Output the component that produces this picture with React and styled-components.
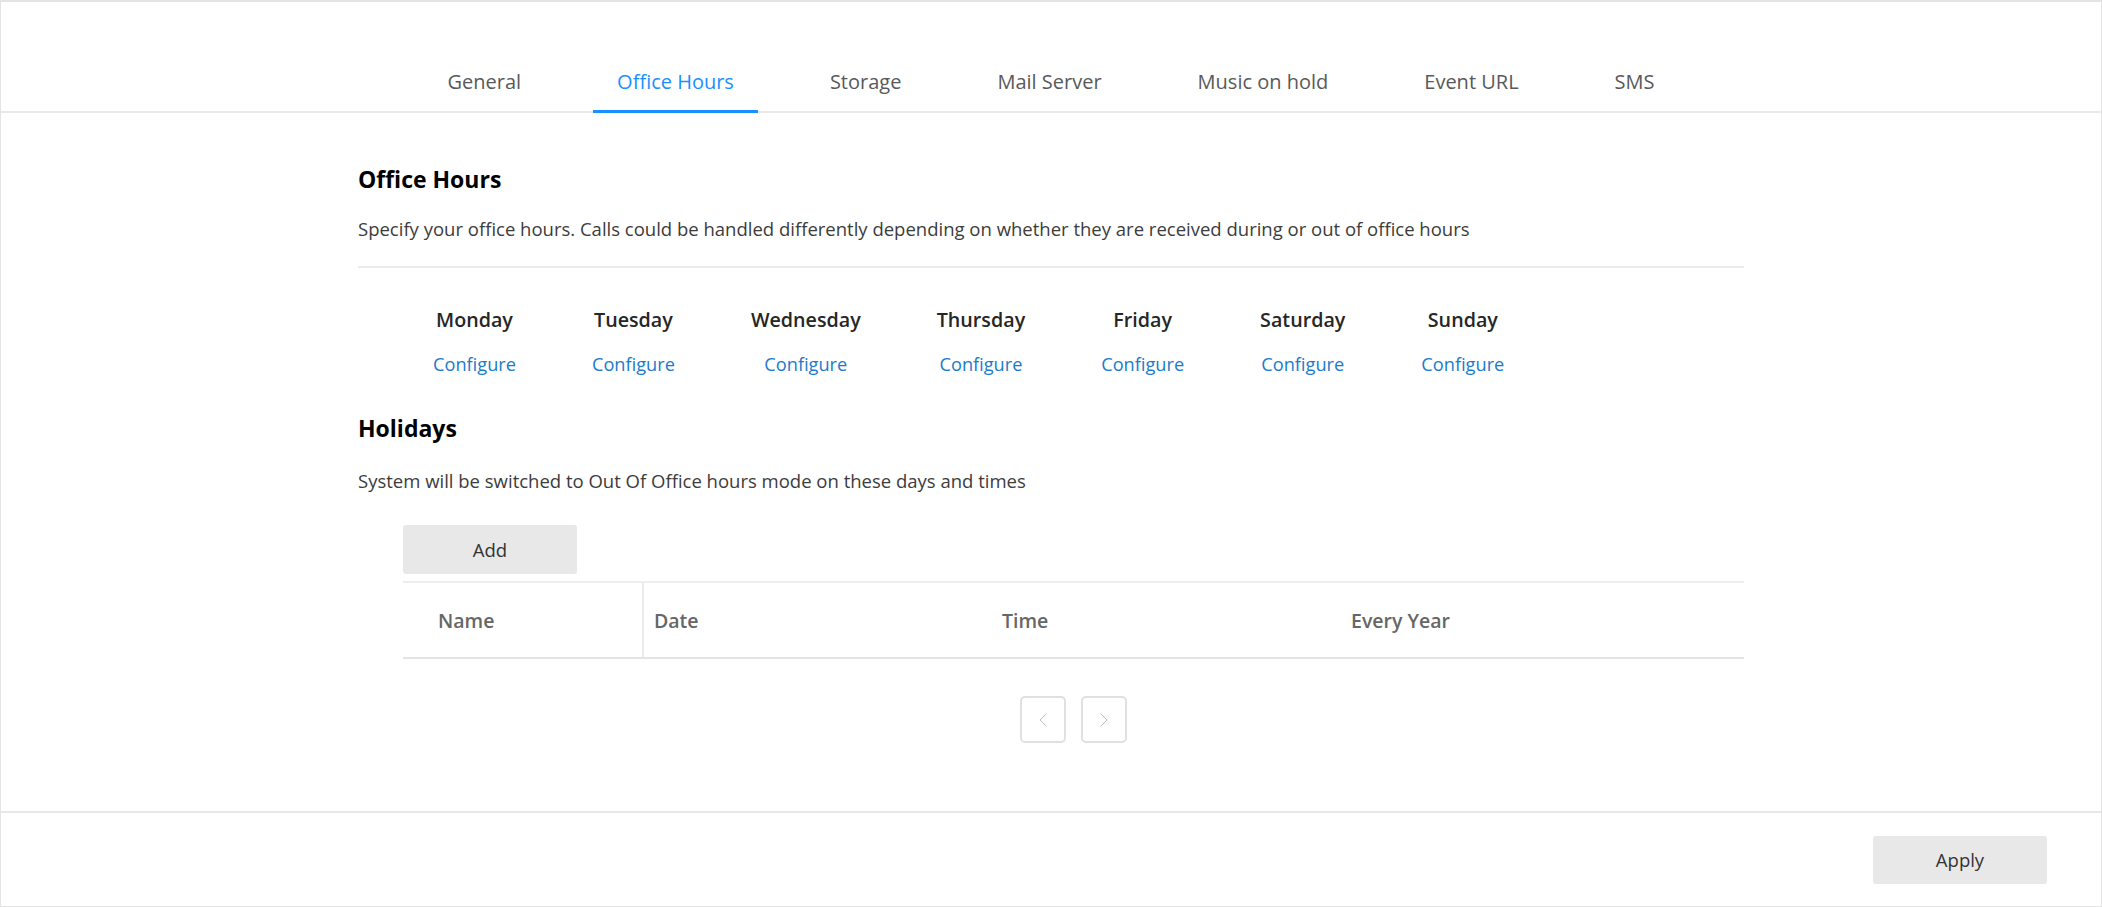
import styled, { createGlobalStyle } from "styled-components";
import { ChevronLeft, ChevronRight } from "lucide-react";

const GlobalStyle = createGlobalStyle`
  html, body {
    margin: 0;
    padding: 0;
    background: #fff;
  }
  body {
    font-family: "Open Sans", "Noto Sans", sans-serif;
    color: #333;
  }
  * {
    box-sizing: border-box;
  }
`;

const Page = styled.div`
  display: flex;
  flex-direction: column;
  height: 907px;
  border: 1px solid #e4e4e4;
  border-top-width: 2px;
`;

const TabBar = styled.nav`
  display: flex;
  justify-content: center;
  align-items: flex-end;
  gap: 48px;
  height: 111px;
  border-bottom: 2px solid #e8e8e8;
`;

const Tab = styled.div`
  position: relative;
  padding: 0 24px 15px;
  font-size: 20px;
  line-height: 28px;
  color: ${(p) => (p.active ? "#1890ff" : "#595959")};
  cursor: pointer;

  &::after {
    content: "";
    display: ${(p) => (p.active ? "block" : "none")};
    position: absolute;
    left: 0;
    right: 0;
    bottom: -2px;
    height: 3px;
    background: #1890ff;
  }
`;

const Main = styled.main`
  flex: 1;
`;

const Content = styled.div`
  width: 66%;
  margin: 0 auto;
`;

const Heading = styled.h2`
  margin: ${(p) => p.top}px 0 0;
  font-size: 23px;
  line-height: 30px;
  font-weight: 700;
  color: #000;
`;

const Description = styled.p`
  margin: ${(p) => p.top}px 0 0;
  font-size: 18.5px;
  line-height: 26px;
  color: #3c3c3c;
`;

const Divider = styled.hr`
  margin: 24px 0 0;
  border: none;
  border-top: 2px solid #ebebeb;
`;

const DaysRow = styled.div`
  display: flex;
  gap: 76px;
  padding-left: 75px;
  margin-top: 38px;
`;

const Day = styled.div`
  display: flex;
  flex-direction: column;
  align-items: center;
  gap: 17px;
`;

const DayName = styled.div`
  font-size: 19.7px;
  line-height: 28px;
  font-weight: 600;
  color: #262626;
`;

const ConfigureLink = styled.a`
  font-size: 18.2px;
  line-height: 26px;
  color: #1b7bc9;
  text-decoration: none;
  cursor: pointer;
`;

const Indented = styled.div`
  margin-left: 45px;
`;

const GreyButton = styled.button`
  width: 174px;
  height: ${(p) => p.h}px;
  border: none;
  border-radius: 3px;
  background: #e8e8e8;
  color: #333;
  font-family: inherit;
  font-size: 18.5px;
  cursor: pointer;
`;

const AddRow = styled.div`
  margin-top: 31px;
`;

const Table = styled.div`
  margin-top: 7px;
  border-top: 2px solid #eeeeee;
  border-bottom: 2px solid #e4e4e4;
`;

const HeaderRow = styled.div`
  display: grid;
  grid-template-columns: 241px 348px 349px 1fr;
  height: 74px;
`;

const HeaderCell = styled.div`
  display: flex;
  align-items: center;
  padding-left: ${(p) => p.pad}px;
  font-size: 19.5px;
  font-weight: 600;
  color: #666;
  border-right: ${(p) => (p.divided ? "2px solid #ebebeb" : "none")};
`;

const Pager = styled.div`
  display: flex;
  justify-content: center;
  gap: 15px;
  margin-top: 37px;
`;

const PageButton = styled.button`
  display: flex;
  align-items: center;
  justify-content: center;
  width: 46px;
  height: 47px;
  padding: 0;
  border: 2px solid #e0e0e0;
  border-radius: 5px;
  background: #fff;
  color: #bdbdbd;
  cursor: pointer;
`;

const Footer = styled.footer`
  display: flex;
  justify-content: flex-end;
  align-items: center;
  height: 95px;
  padding-right: 54px;
  border-top: 2px solid #e8e8e8;
`;

const tabs = ["General", "Office Hours", "Storage", "Mail Server", "Music on hold", "Event URL", "SMS"];
const days = ["Monday", "Tuesday", "Wednesday", "Thursday", "Friday", "Saturday", "Sunday"];
const columns = [
  { label: "Name", pad: 35, divided: true },
  { label: "Date", pad: 10 },
  { label: "Time", pad: 10 },
  { label: "Every Year", pad: 10 },
];

const App = () => {
  return (
    <>
      <GlobalStyle />
      <Page>
        <TabBar>
          {tabs.map((t) => (
            <Tab key={t} active={t === "Office Hours"}>
              {t}
            </Tab>
          ))}
        </TabBar>
        <Main>
          <Content>
            <Heading top={51}>Office Hours</Heading>
            <Description top={22}>
              Specify your office hours. Calls could be handled differently depending on whether they are
              received during or out of office hours
            </Description>
            <Divider />
            <DaysRow>
              {days.map((d) => (
                <Day key={d}>
                  <DayName>{d}</DayName>
                  <ConfigureLink>Configure</ConfigureLink>
                </Day>
              ))}
            </DaysRow>
            <Heading top={36}>Holidays</Heading>
            <Description top={25}>System will be switched to Out Of Office hours mode on these days and times</Description>
            <Indented>
              <AddRow>
                <GreyButton h={49}>Add</GreyButton>
              </AddRow>
              <Table>
                <HeaderRow>
                  {columns.map((c) => (
                    <HeaderCell key={c.label} pad={c.pad} divided={c.divided}>
                      {c.label}
                    </HeaderCell>
                  ))}
                </HeaderRow>
              </Table>
              <Pager>
                <PageButton>
                  <ChevronLeft size={24} strokeWidth={1} />
                </PageButton>
                <PageButton>
                  <ChevronRight size={24} strokeWidth={1} />
                </PageButton>
              </Pager>
            </Indented>
          </Content>
        </Main>
        <Footer>
          <GreyButton h={48}>Apply</GreyButton>
        </Footer>
      </Page>
    </>
  );
};

export default App;
